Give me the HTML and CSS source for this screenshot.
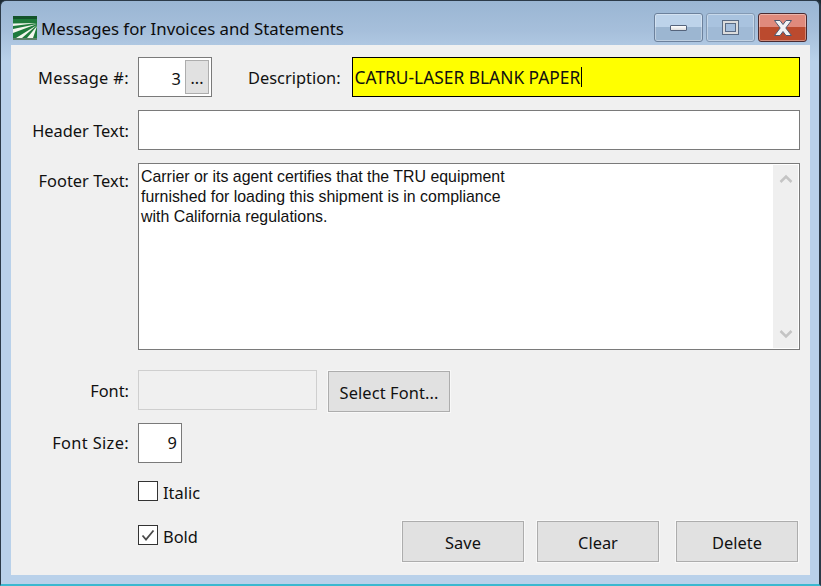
FILE: index.html
```html
<!DOCTYPE html>
<html lang="en">
<head>
<meta charset="utf-8">
<title>Messages for Invoices and Statements</title>
<link rel="stylesheet" href="styles.css">
</head>
<body>
<div class="window">
  <header class="titlebar">
    <svg class="app-icon" width="24" height="24" viewBox="0 0 24 24">
      <rect width="24" height="24" fill="#1f7a3c"/>
      <rect width="24" height="3" fill="#14532a"/>
      <path d="M24 7 L0 7.500 L0 10 Z M24 8 L0 13 L0 17 Z M24 9 L3 22 L9 22 Z M24 10 L14 22 L20 22 Z" fill="#f4f6ee"/>
      <rect y="22" width="24" height="2" fill="#5b7f68"/>
    </svg>
    <span class="title">Messages for Invoices and Statements</span>
    <div class="caption-buttons">
      <div class="cap cap-min"><span class="min-glyph"></span></div>
      <div class="cap cap-max"><span class="max-glyph"></span></div>
      <div class="cap cap-close">
        <svg width="20" height="18" viewBox="0 0 20 18"><path d="M1.500 1.500 H7 L10 5.500 L13 1.500 H18.500 L12.800 9 L18.500 16.500 H13 L10 12.500 L7 16.500 H1.500 L7.200 9 Z" fill="#f2f2f4" stroke="#4e5a72" stroke-width="1"/></svg>
      </div>
    </div>
  </header>
  <main class="client">
    <div class="row row-msg">
      <label class="label label-message">Message #:</label>
      <div class="field msg-field"><span class="msg-num">3</span><span class="dots">...</span></div>
      <label class="label desc-label">Description:</label>
      <div class="field desc-field">CATRU-LASER BLANK PAPER<span class="caret"></span></div>
    </div>
    <div class="row row-header">
      <label class="label">Header Text:</label>
      <div class="field wide-field"></div>
    </div>
    <div class="row row-footer">
      <label class="label footer-label">Footer Text:</label>
      <div class="field memo">
        <div class="memo-text">Carrier or its agent certifies that the TRU equipment<br>furnished for loading this shipment is in compliance<br>with California regulations.</div>
        <div class="scrollbar">
          <svg width="14" height="9" viewBox="0 0 14 9"><path d="M1.500 8 L7 2.500 L12.500 8" fill="none" stroke="#c4c4c4" stroke-width="2.500"/></svg>
          <svg width="14" height="9" viewBox="0 0 14 9"><path d="M1.500 1 L7 6.500 L12.500 1" fill="none" stroke="#c4c4c4" stroke-width="2.500"/></svg>
        </div>
      </div>
    </div>
    <div class="row row-font">
      <label class="label">Font:</label>
      <div class="font-box"></div>
      <div class="btn btn-font"><span class="btn-text">Select Font...</span></div>
    </div>
    <div class="row row-size">
      <label class="label label-size">Font Size:</label>
      <div class="field size-field">9</div>
    </div>
    <div class="bottom">
      <div class="checks">
        <div class="check-row"><span class="box"></span><span class="check-label">Italic</span></div>
        <div class="check-row"><span class="box">
          <svg width="18" height="18" viewBox="0 0 18 18"><path d="M3.500 9.500 L7 13.500 L14.500 4.500" fill="none" stroke="#4a4a4a" stroke-width="1.800"/></svg>
        </span><span class="check-label">Bold</span></div>
      </div>
      <div class="actions">
        <div class="btn"><span class="btn-text">Save</span></div>
        <div class="btn btn-clear"><span class="btn-text">Clear</span></div>
        <div class="btn btn-delete"><span class="btn-text">Delete</span></div>
      </div>
    </div>
  </main>
</div>
</body>
</html>
```
FILE: styles.css
```css
* { box-sizing: border-box; }
html, body { margin: 0; padding: 0; }
body {
  width: 821px;
  height: 586px;
  overflow: hidden;
  background: #1c2a33;
  font-family: "Noto Sans", "Open Sans", sans-serif;
  font-size: 16.4px;
  color: #111;
}
.window {
  width: 821px;
  height: 586px;
  display: flex;
  flex-direction: column;
  background: linear-gradient(180deg, #9ab6d3 0, #a6bfdb 30px, #b9d1ea 60px, #b9d1ea 100%);
  border: 1px solid #2b3a48;
  border-width: 1px 2px 2px 1px;
  border-bottom-color: #3bb8d0;
  border-radius: 6px 6px 0 0;
}
.titlebar {
  height: 44px;
  display: flex;
  align-items: flex-start;
  padding: 15px 0 0 12px;
  flex: none;
}
.app-icon { flex: none; }
.title {
  margin-left: 4px;
  margin-top: 1px;
  line-height: 24px;
  font-size: 16.8px;
  white-space: nowrap;
  color: #0c0c0c;
}
.caption-buttons {
  margin-left: auto;
  margin-top: -3px;
  margin-right: 12px;
  display: flex;
  gap: 3px;
}
.cap {
  width: 49px;
  height: 29px;
  border-radius: 3px;
  border: 1px solid #6c819c;
  display: flex;
  align-items: center;
  justify-content: center;
  box-shadow: inset 0 0 0 1px rgba(255,255,255,.35);
}
.cap-min { background: linear-gradient(180deg, #bdd3ea 0 50%, #9cb6d1 50% 100%); }
.cap-max { background: linear-gradient(180deg, #a9c3df 0 50%, #a0bad6 50% 100%); border-color: #849ab4; }
.cap-close { background: linear-gradient(180deg, #e08a7c 0 50%, #bb4a2e 50% 100%); border-color: #4a2a30; }
.min-glyph {
  width: 17px;
  height: 6px;
  background: linear-gradient(180deg, #fff, #dcdcdc);
  border: 1px solid #55647c;
  border-radius: 1px;
}
.max-glyph {
  width: 17px;
  height: 15px;
  background: #a6bfdc;
  border: 3px solid #dcdcdc;
  outline: 1px solid #5a6a82;
  outline-offset: -1px;
  box-shadow: inset 0 0 0 1px #5a6a82;
}
.client {
  flex: 1;
  margin: 0 9px 9px 10px;
  background: #f0f0f0;
  display: flex;
  flex-direction: column;
  padding: 12px 10px 0 0;
}
.row {
  display: flex;
  align-items: center;
}
.label {
  width: 118px;
  text-align: right;
  flex: none;
  margin-right: 9px;
  white-space: nowrap;
}
.label-message, .label-size { letter-spacing: .35px; }
.field {
  background: #fff;
  border: 1px solid #7a7a7a;
  height: 40px;
  flex: none;
}
.msg-field {
  width: 74px;
  display: flex;
  align-items: center;
  justify-content: flex-end;
  padding: 2px;
}
.msg-num { margin-right: 4px; padding-top: 2px; }
.dots {
  width: 24px;
  height: 34px;
  background: #e1e1e1;
  border: 1px solid #adadad;
  display: flex;
  align-items: center;
  justify-content: center;
  font-size: 16px;
  padding-top: 2px;
}
.row-msg .desc-label { width: auto; margin: 0 11px 0 36px; }
.desc-field {
  flex: 1;
  background: #ff0;
  border-color: #000;
  padding: 0 2px;
  display: flex;
  align-items: center;
  white-space: nowrap;
  font-size: 17.35px;
}
.caret { width: 1px; height: 20px; background: #000; margin-left: 1px; }
.row-header { margin-top: 13px; }
.wide-field { flex: 1; }
.row-footer { margin-top: 13px; align-items: flex-start; }
.footer-label { margin-top: 6px; }
.memo {
  flex: 1;
  height: 187px;
  padding: 1px;
  display: flex;
}
.memo-text {
  flex: 1;
  padding: 2px 1px;
  font-family: "Liberation Sans", Arial, sans-serif;
  font-size: 15.9px;
  line-height: 20px;
}
.scrollbar {
  width: 25px;
  background: #efefef;
  display: flex;
  flex-direction: column;
  justify-content: space-between;
  align-items: center;
  padding: 9px 0;
}
.row-font { margin-top: 20px; height: 42px; }
.row-font .label { padding-bottom: 2px; }
.font-box {
  width: 179px;
  height: 40px;
  margin-top: -2px;
  border: 1px solid #cfcfcf;
  background: #f0f0f0;
}
.btn {
  width: 122px;
  height: 41px;
  background: #e1e1e1;
  border: 1px solid #adadad;
  box-shadow: 0 0 0 1px #f8f8f8;
  display: flex;
  align-items: center;
  justify-content: center;
  flex: none;
}
.btn-text { padding-top: 2px; }
.btn-font .btn-text { padding-top: 3px; letter-spacing: .1px; }
.btn-font { margin-left: 11px; }
.row-size { margin-top: 11px; }
.label-size { padding-bottom: 2px; }
.size-field {
  width: 44px;
  display: flex;
  align-items: center;
  justify-content: flex-end;
  padding: 0 4px 2px 0;
}
.bottom {
  display: flex;
  align-items: flex-start;
  padding-left: 127px;
}
.checks {
  display: flex;
  flex-direction: column;
  gap: 24px;
  padding-top: 18px;
}
.check-row {
  display: flex;
  align-items: center;
  height: 20px;
}
.box {
  width: 20px;
  height: 20px;
  border: 1px solid #333;
  background: #fff;
  display: flex;
  align-items: center;
  justify-content: center;
}
.check-label { margin-left: 5px; padding-top: 2px; }
.actions {
  margin-left: auto;
  margin-top: 58px;
  display: flex;
  gap: 13px;
  margin-right: 2px;
}
.btn-delete { margin-left: 4px; }
```
